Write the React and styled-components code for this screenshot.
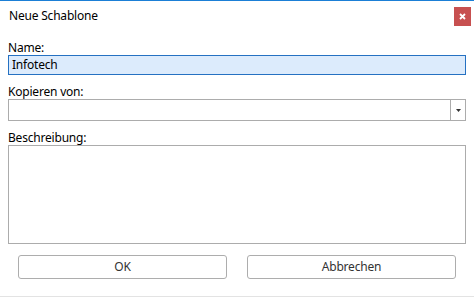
import React from "react";
import styled, { createGlobalStyle } from "styled-components";

const Global = createGlobalStyle`
  html, body { margin: 0; padding: 0; background: #fff; }
  body { font-family: "Noto Sans", "Open Sans", sans-serif; font-size: 12px; color: #000; letter-spacing: -0.2px; }
  * { box-sizing: border-box; }
`;

const Window = styled.div`
  width: 474px;
  height: 297px;
  background: #fff;
  border-top: 1px solid #1b7fd6;
  display: flex;
  flex-direction: column;
`;

const TitleBar = styled.div`
  height: 40px;
  display: flex;
  justify-content: space-between;
  align-items: flex-start;
  padding: 6px 3px 0 9px;
`;

const Title = styled.div`
  margin-top: 1px;
  font-size: 12px;
  line-height: 16px;
`;

const CloseButton = styled.button`
  width: 17px;
  height: 19px;
  border: none;
  padding: 0;
  margin: 0;
  background: #c75050;
  display: flex;
  align-items: center;
  justify-content: center;
`;

const Form = styled.div`
  display: flex;
  flex-direction: column;
  padding: 0 8px;
`;

const Field = styled.div`
  display: flex;
  flex-direction: column;
  margin-top: ${(p) => p.$top}px;
`;

const Label = styled.div`
  height: 13px;
  line-height: 13px;
  margin-bottom: ${(p) => p.$gap}px;
  white-space: nowrap;
`;

const TextInput = styled.div`
  height: 20px;
  border: 1px solid #2571c2;
  background: #dcebfc;
  padding-left: 3px;
  line-height: 18px;
`;

const Combo = styled.div`
  height: 22px;
  border: 1px solid #acacac;
  display: flex;
`;

const ComboText = styled.div`
  flex: 1;
`;

const ComboArrow = styled.div`
  width: 15px;
  border-left: 1px solid #acacac;
  display: flex;
  align-items: center;
  justify-content: center;
`;

const TextArea = styled.div`
  height: 99px;
  border: 1px solid #acacac;
`;

const ButtonRow = styled.div`
  display: flex;
  gap: 20px;
  padding: 0 10px;
  margin-top: 11px;
`;

const Button = styled.div`
  flex: 1;
  height: 24px;
  border: 1px solid #adadad;
  border-radius: 3px;
  background: #fff;
  color: #333;
  display: flex;
  align-items: center;
  justify-content: center;
  line-height: 16px;
`;

const Spacer = styled.div`
  flex: 1;
`;

const BottomLine = styled.div`
  height: 1px;
  background: #e3e3e3;
`;

export default function App() {
  return (
    <>
      <Global />
      <Window>
        <TitleBar>
          <Title>Neue Schablone</Title>
          <CloseButton aria-label="Schließen">
            <svg width="7" height="7" viewBox="0 0 7 7">
              <path d="M1 1 L6 6 M6 1 L1 6" stroke="#fff" strokeWidth="1.8" />
            </svg>
          </CloseButton>
        </TitleBar>
        <Form>
          <Field $top={0}>
            <Label $gap={1}>Name:</Label>
            <TextInput>Infotech</TextInput>
          </Field>
          <Field $top={10}>
            <Label $gap={1}>Kopieren von:</Label>
            <Combo>
              <ComboText />
              <ComboArrow>
                <svg width="5" height="3" viewBox="0 0 5 3">
                  <path d="M0 0 H5 L2.5 3 Z" fill="#333" />
                </svg>
              </ComboArrow>
            </Combo>
          </Field>
          <Field $top={10}>
            <Label $gap={1}>Beschreibung:</Label>
            <TextArea />
          </Field>
          <ButtonRow>
            <Button>OK</Button>
            <Button>Abbrechen</Button>
          </ButtonRow>
        </Form>
        <Spacer />
        <BottomLine />
      </Window>
    </>
  );
}
